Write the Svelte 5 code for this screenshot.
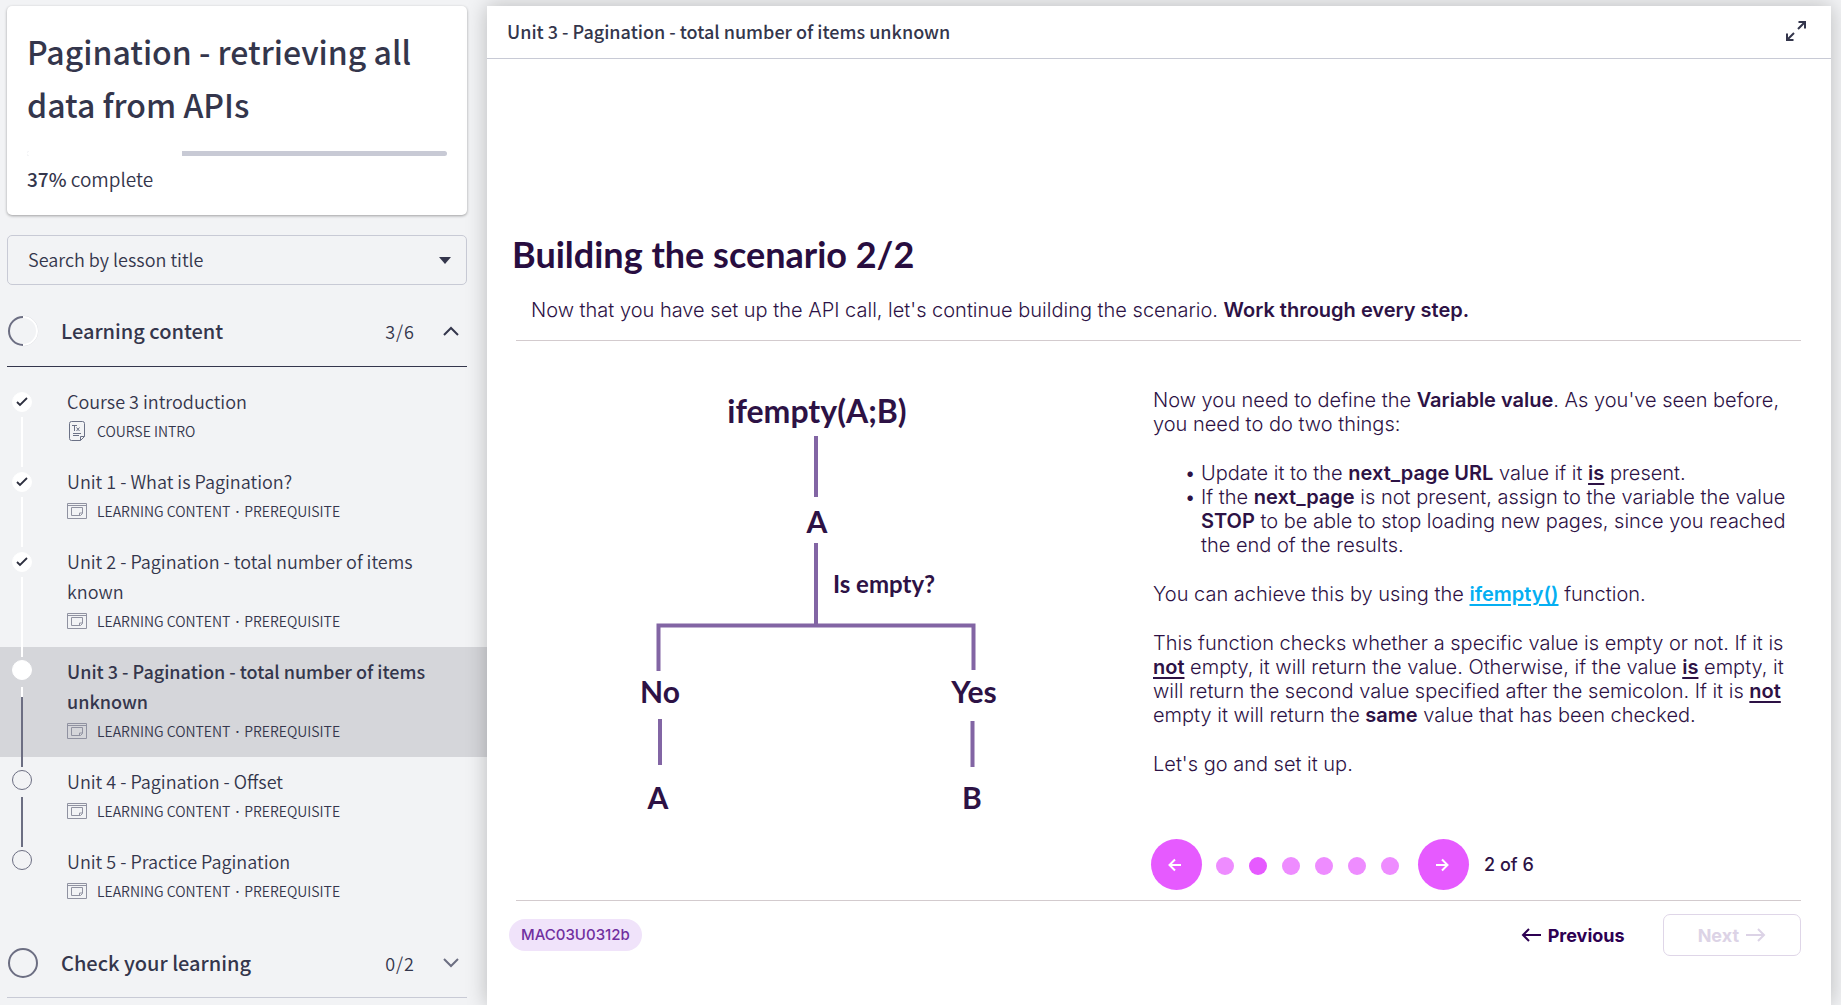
<script lang="ts">
  type Lesson = { title: string; meta: string[]; state: 'done' | 'current' | 'todo'; icon: 'text' | 'window' };

  const unitMeta = ['LEARNING CONTENT', 'PREREQUISITE'];
  const lessons: Lesson[] = [
    { title: 'Course 3 introduction', meta: ['COURSE INTRO'], state: 'done', icon: 'text' },
    { title: 'Unit 1 - What is Pagination?', meta: unitMeta, state: 'done', icon: 'window' },
    { title: 'Unit 2 - Pagination - total number of items known', meta: unitMeta, state: 'done', icon: 'window' },
    { title: 'Unit 3 - Pagination - total number of items unknown', meta: unitMeta, state: 'current', icon: 'window' },
    { title: 'Unit 4 - Pagination - Offset', meta: unitMeta, state: 'todo', icon: 'window' },
    { title: 'Unit 5 - Practice Pagination', meta: unitMeta, state: 'todo', icon: 'window' }
  ];

  const progress = 37;
  const steps = [1, 2, 3, 4, 5, 6];
  let step = $state(2);
</script>

<div class="page">
  <aside class="sidebar">
    <section class="course">
      <h1>Pagination - retrieving all data from APIs</h1>
      <div class="track"><div class="done" style="width: {progress}%"></div></div>
      <p class="percent"><strong>{progress}%</strong> complete</p>
    </section>

    <div class="search">
      <select aria-label="Search by lesson title">
        <option>Search by lesson title</option>
      </select>
      <svg width="12" height="7" viewBox="0 0 12 7" aria-hidden="true"><path d="M0 0h12L6 7z" fill="#34364c" /></svg>
    </div>

    <button class="section open" aria-expanded="true">
      <svg class="ring" width="32" height="32" viewBox="0 0 32 32" fill="none" aria-hidden="true">
        <path d="M16 1.5a14.5 14.5 0 0 1 0 29" stroke="#d9dae0" stroke-width="1.5" />
        <path d="M16 2a14 14 0 0 1 0 28" stroke="#fff" stroke-width="2" />
        <path d="M16 2a14 14 0 0 0 0 28" stroke="#6c6e82" stroke-width="2" />
      </svg>
      <span class="name">Learning content</span>
      <span class="count">3/6</span>
      <svg width="16" height="10" viewBox="0 0 16 10" fill="none" aria-hidden="true"><path d="M1 9l7-7 7 7" stroke="#34364c" stroke-width="2" /></svg>
    </button>

    <ol class="lessons">
      {#each lessons as lesson}
        <li class={lesson.state}>
          <div class="rail">
            <span class="dot">
              {#if lesson.state === 'done'}
                <svg width="12" height="10" viewBox="0 0 12 10" fill="none" aria-hidden="true"><path d="M1 5l3 3 7-7" stroke="#2c2e3e" stroke-width="1.8" /></svg>
              {/if}
            </span>
            <span class="link"></span>
          </div>
          <a href="#lesson">
            <span class="title">{lesson.title}</span>
            <span class="meta">
              <span class="icon">
                {#if lesson.icon === 'text'}
                  <svg width="16" height="20" viewBox="0 0 16 20" fill="none" stroke="#6b7186" aria-hidden="true">
                    <path d="M2.5.5h11a2 2 0 0 1 2 2v13l-4 4h-9a2 2 0 0 1-2-2v-15a2 2 0 0 1 2-2zM15.500 15.500h-4v4" />
                    <path d="M3 4.500h5M5.500 4.500v5.500M7.500 6.500l3 3.500M10.500 6.500l-3 3.500M4 12.500h8M4 14.500h6" />
                  </svg>
                {:else}
                  <svg width="20" height="16" viewBox="0 0 20 16" fill="none" stroke="#9092a1" aria-hidden="true">
                    <path d="M.5.5h19v15h-19zM.5 2.500h19" />
                    <path d="M4.500 4.500h11v6l-2 2h-9zM15.500 10h-3v2.500" />
                  </svg>
                {/if}
              </span>
              <span>
                {#each lesson.meta as part, i}{#if i > 0}<span class="sep">·</span>{/if}{part}{/each}
              </span>
            </span>
          </a>
        </li>
      {/each}
    </ol>

    <button class="section" aria-expanded="false">
      <svg class="ring" width="32" height="32" viewBox="0 0 32 32" fill="none" aria-hidden="true"><circle cx="16" cy="16" r="14" stroke="#6c6e82" stroke-width="2" /></svg>
      <span class="name">Check your learning</span>
      <span class="count">0/2</span>
      <svg width="16" height="10" viewBox="0 0 16 10" fill="none" aria-hidden="true"><path d="M1 1l7 7 7-7" stroke="#6c6e82" stroke-width="2" /></svg>
    </button>
  </aside>

  <main>
    <header>
      <h2>Unit 3 - Pagination - total number of items unknown</h2>
      <button class="expand" aria-label="Full screen">
        <svg width="22" height="22" viewBox="0 0 22 22" fill="none" stroke="#34364c" stroke-width="2" aria-hidden="true">
          <path d="M13 9l7-7M13.500 2H20v6.500M9 13l-7 7M8.500 20H2v-6.500" />
        </svg>
      </button>
    </header>

    <article>
      <h3>Building the scenario 2/2</h3>
      <p class="lead">Now that you have set up the API call, let's continue building the scenario. <b>Work through every step.</b></p>

      <div class="body">
        <svg class="tree" width="450" height="460" viewBox="0 0 450 460" role="img" aria-label="ifempty decision tree">
          <g fill="none" stroke="#8265a4" stroke-width="4">
            <path d="M216 66v61M216 173v82M58.500 301v-45.500h315v44.500M60 349v46M372.500 351v46" />
          </g>
          <g class="nodes">
            <text class="large" x="217" y="53">ifempty(A;B)</text>
            <text x="217" y="163">A</text>
            <text x="60" y="333">No</text>
            <text x="374" y="333">Yes</text>
            <text x="58" y="439">A</text>
            <text x="372" y="439">B</text>
            <text class="small" x="284" y="223">Is empty?</text>
          </g>
        </svg>

        <div class="copy">
          <p>Now you need to define the <b>Variable value</b>. As you've seen before, you need to do two things:</p>
          <ul>
            <li>Update it to the <b>next_page URL</b> value if it <b><u>is</u></b> present.</li>
            <li>If the <b>next_page</b> is not present, assign to the variable the value <b>STOP</b> to be able to stop loading new pages, since you reached the end of the results.</li>
          </ul>
          <p>You can achieve this by using the <a href="#ifempty">ifempty()</a> function.</p>
          <p>This function checks whether a specific value is empty or not. If it is <b><u>not</u></b> empty, it will return the value. Otherwise, if the value <b><u>is</u></b> empty, it will return the second value specified after the semicolon. If it is <b><u>not</u></b> empty it will return the <b>same</b> value that has been checked.</p>
          <p>Let's go and set it up.</p>

          <div class="pager">
            <button class="round" aria-label="Previous step" onclick={() => (step = Math.max(1, step - 1))}>
              <svg width="18" height="16" viewBox="0 0 18 16" fill="none" stroke="#fff" stroke-width="2" aria-hidden="true"><path d="M13 8H2M7 2.500L1.500 8 7 13.500" /></svg>
            </button>
            <div class="dots">
              {#each steps as n}
                <button class="pip" class:active={n === step} aria-label="Step {n}" onclick={() => (step = n)}></button>
              {/each}
            </div>
            <button class="round" aria-label="Next step" onclick={() => (step = Math.min(6, step + 1))}>
              <svg width="18" height="16" viewBox="0 0 18 16" fill="none" stroke="#fff" stroke-width="2" aria-hidden="true"><path d="M1 8h11M7 2.500L12.500 8 7 13.500" /></svg>
            </button>
            <span>{step} of 6</span>
          </div>
        </div>
      </div>

      <footer>
        <span class="tag">MAC03U0312b</span>
        <button class="nav">
          <svg width="20" height="14" viewBox="0 0 20 14" fill="none" stroke="currentColor" stroke-width="2" aria-hidden="true"><path d="M20 7H2M8 1L2 7l6 6" /></svg>
          Previous
        </button>
        <button class="nav next" disabled>
          Next
          <svg width="20" height="14" viewBox="0 0 20 14" fill="none" stroke="currentColor" stroke-width="2" aria-hidden="true"><path d="M0 7h18M12 1l6 6-6 6" /></svg>
        </button>
      </footer>
    </article>
  </main>
</div>

<style>
  :global(body) { background: #f2f3f5; }
  * { box-sizing: border-box; }
  h1, h2, h3, p, ul, ol { margin: 0; padding: 0; }
  button { border: 0; padding: 0; background: none; color: inherit; font: inherit; cursor: pointer; }
  svg { flex: none; }

  .page {
    display: grid;
    grid-template-columns: 487px minmax(0, 1fr);
    min-height: 100vh;
    padding: 6px 10px 0 0;
    font-family: "Noto Sans CJK SC", "Open Sans", sans-serif;
    font-weight: 350;
    color: #34364c;
  }

  .sidebar { display: flex; flex-direction: column; }
  .course {
    margin: 0 20px 0 7px;
    padding: 19px 20px 21px;
    border-radius: 5px;
    background: #fff;
    box-shadow: 0 1px 3px rgba(0, 0, 0, 0.35);
  }
  h1 { font-size: 32px; line-height: 53px; font-weight: 500; }
  .track { height: 5px; margin-top: 20px; border-radius: 3px; background: #c8cad5; overflow: hidden; }
  .done { height: 100%; background: #fff; }
  .percent { margin-top: 8px; font-size: 19px; line-height: 30px; }
  .percent strong { font-weight: 500; }

  .search { display: flex; align-items: center; margin: 20px 20px 0 7px; }
  .search select {
    appearance: none;
    flex: 1;
    height: 50px;
    padding: 0 20px 3px;
    border: 1px solid #c8cad5;
    border-radius: 5px;
    background: transparent;
    font: 350 18px "Noto Sans CJK SC", "Open Sans", sans-serif;
    color: #34364c;
  }
  .search svg { margin-left: -28px; margin-right: 16px; pointer-events: none; }

  .section {
    display: flex;
    align-items: center;
    height: 70px;
    margin: 0 20px 0 7px;
    padding-right: 8px;
    border-bottom: 1px solid #c8cad5;
    text-align: left;
  }
  .section.open { height: 82px; padding-top: 10px; border-color: #34364c; }
  .section .name { flex: 1; margin-left: 22px; font-size: 20px; font-weight: 500; }
  .section .count { margin-right: 28px; font-size: 18px; letter-spacing: 1px; }

  .lessons { list-style: none; padding: 10px 0; margin-bottom: 1px; }
  .lessons li { display: flex; background: transparent; }
  .lessons .done { height: auto; }
  .lessons .current { background: #d5d6da; }
  .rail {
    position: relative;
    z-index: 1;
    display: flex;
    flex-direction: column;
    align-items: center;
    width: 20px;
    margin: 13px 35px -10px 12px;
  }
  .done .rail { margin-top: 15px; }
  .dot {
    display: grid;
    place-items: center;
    width: 20px;
    height: 20px;
    border: 1px solid #6c6e82;
    border-radius: 50%;
  }
  .done .dot, .current .dot { border-color: #fff; background: #fff; }
  .link { flex: 1; width: 2px; margin-top: 7px; background: #6c6e82; }
  .done .link { margin-top: 5px; background: #fff; }
  .current .link { background: linear-gradient(#fff 10px, #6c6e82 10px); }
  li:last-child .link { background: none; }
  .lessons a { flex: 1; padding: 9px 54px 11px 0; color: #34364c; text-decoration: none; }
  .title { display: block; font-size: 18px; line-height: 30px; }
  .current .title { font-weight: 500; }
  .meta { display: flex; align-items: center; gap: 10px; font-size: 14px; line-height: 30px; }
  .sep { margin: 0 5px; font-family: "Open Sans", sans-serif; font-weight: 600; line-height: 20px; }
  .icon { display: flex; justify-content: center; width: 20px; }

  main {
    position: relative;
    z-index: 2;
    background: #fff;
    box-shadow: 0 0 20px rgba(0, 0, 0, 0.24);
  }
  header {
    display: flex;
    align-items: center;
    justify-content: space-between;
    height: 53px;
    padding: 0 24px 2px 20px;
    border-bottom: 1px solid #c8cad5;
  }
  h2 { font-size: 18px; font-weight: 500; }
  .expand { display: flex; }

  article { padding: 167px 30px 0 29px; font-family: Inter, sans-serif; color: #2d1245; }
  h3 { margin-left: -4px; font: 700 36px/56px Lato, sans-serif; color: #280d40; }
  .lead { padding: 0 15px 2px; font-size: 20px; line-height: 56px; font-weight: 300; }
  b { font-weight: 600; }
  .body {
    display: grid;
    grid-template-columns: minmax(450px, 1fr) 648px;
    padding: 29px 0 10px;
    border: solid #d3cbce;
    border-width: 1px 0;
  }
  .tree { justify-self: center; margin-right: 20px; font: 700 30px Lato, sans-serif; }
  .nodes { fill: #2d1245; text-anchor: middle; }
  .large { font-size: 32px; }
  .small { font-size: 24px; }
  .copy { padding-top: 18px; font-size: 20px; line-height: 24px; font-weight: 300; }
  .copy > p { margin-bottom: 25px; }
  .copy ul { margin-bottom: 25px; padding-left: 48px; list-style-type: "•\00a0"; }
  .copy a { color: #05aff2; font-weight: 600; }
  u, .copy a { text-underline-offset: 3px; text-decoration-thickness: 2px; }

  .pager { display: flex; align-items: center; margin: 63px 0 0 -2px; }
  .round { display: grid; place-items: center; width: 51px; height: 51px; border-radius: 50%; background: #e65aff; }
  .dots { display: flex; gap: 15px; margin: 2px 19px 0 14px; }
  .pip { width: 18px; height: 18px; border-radius: 50%; background: #ee8cff; }
  .pip.active { background: #e65aff; }
  .pager span { margin-left: 15px; font-size: 18px; font-weight: 500; }

  footer { display: flex; align-items: center; padding: 13px 0; }
  .tag {
    margin: 0 auto 0 -7px;
    padding: 0 12px;
    border-radius: 16px;
    background: #f0e3fa;
    font-size: 15px;
    line-height: 32px;
    font-weight: 500;
    color: #7030a0;
  }
  .nav { display: flex; align-items: center; gap: 7px; font-size: 18px; font-weight: 700; color: #2d0052; }
  .next {
    height: 42px;
    margin-left: 38px;
    padding: 0 34px;
    border: 1px solid #dfd6e8;
    border-radius: 7px;
    color: #dcd3e6;
  }
</style>
